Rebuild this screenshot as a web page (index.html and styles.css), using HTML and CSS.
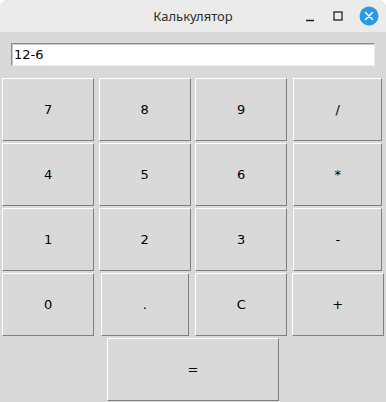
FILE: index.html
```html
<!DOCTYPE html>
<html lang="ru">
<head>
<meta charset="utf-8">
<title>Калькулятор</title>
<link rel="stylesheet" href="styles.css">
</head>
<body>
<div class="window">
  <div class="titlebar">
    <div class="title">Калькулятор</div>
    <div class="controls">
      <svg class="ctl" width="14" height="14" viewBox="0 0 14 14"><line x1="3" y1="11.5" x2="11" y2="11.5" stroke="#222" stroke-width="1.3"/></svg>
      <svg class="ctl" width="14" height="14" viewBox="0 0 14 14"><rect x="3" y="3" width="8" height="8" fill="none" stroke="#222" stroke-width="1.3"/></svg>
      <svg class="ctl close" width="20" height="20" viewBox="0 0 20 20"><circle cx="10" cy="10" r="9.5" fill="#2a9be0"/><path d="M6.5 6.5 L13.5 13.5 M13.5 6.5 L6.5 13.5" stroke="#fff" stroke-width="1.5" stroke-linecap="round"/></svg>
    </div>
  </div>
  <div class="content">
    <div class="entry">12-6</div>
    <div class="keys">
      <div class="btn">7</div>
      <div class="btn">8</div>
      <div class="btn">9</div>
      <div class="btn narrow">/</div>
      <div class="btn">4</div>
      <div class="btn">5</div>
      <div class="btn">6</div>
      <div class="btn narrow">*</div>
      <div class="btn">1</div>
      <div class="btn">2</div>
      <div class="btn">3</div>
      <div class="btn narrow">-</div>
      <div class="btn">0</div>
      <div class="btn dot">.</div>
      <div class="btn">C</div>
      <div class="btn">+</div>
      <div class="btn equals">=</div>
    </div>
  </div>
</div>
</body>
</html>
```

FILE: styles.css
```css
html, body {
  margin: 0;
  padding: 0;
  background: #ffffff;
}
.window {
  width: 386px;
  height: 402px;
  background: #d9d9d9;
  border-radius: 8px 8px 0 0;
  overflow: hidden;
  display: flex;
  flex-direction: column;
}
.titlebar {
  height: 32px;
  background: #ebebeb;
  position: relative;
  display: flex;
  align-items: center;
  justify-content: center;
}
.title {
  font-family: "Noto Sans", sans-serif;
  font-size: 13px;
  color: #2e2e2e;
}
.controls {
  position: absolute;
  right: 7px;
  top: 6px;
  display: flex;
  align-items: center;
  gap: 14px;
}
.ctl {
  display: block;
}
.content {
  display: flex;
  flex-direction: column;
}
.entry {
  margin: 11px 0 0 11px;
  width: 360px;
  height: 21px;
  background: #ffffff;
  border-top: 1px solid #8c8c8c;
  border-left: 1px solid #8c8c8c;
  border-bottom: 1px solid #ececec;
  border-right: 1px solid #ececec;
  box-shadow: inset 1px 1px 0 #c8c8c8;
  font-family: "DejaVu Sans", sans-serif;
  font-size: 13px;
  line-height: 21px;
  padding-left: 2px;
  box-sizing: content-box;
  color: #000;
}
.keys {
  margin-top: 12px;
  display: grid;
  grid-template-columns: repeat(4, 1fr);
  grid-auto-rows: 63px;
  row-gap: 2px;
  justify-items: center;
}
.btn {
  width: 92px;
  height: 63px;
  box-sizing: border-box;
  background: #d9d9d9;
  border-top: 1px solid #ffffff;
  border-left: 1px solid #ffffff;
  border-right: 1px solid #7f7f7f;
  border-bottom: 1px solid #7f7f7f;
  display: flex;
  align-items: center;
  justify-content: center;
  font-family: "DejaVu Sans", sans-serif;
  font-size: 13px;
  color: #000;
}
.btn.narrow {
  width: 89px;
}
.btn.dot {
  width: 88px;
}
.btn.equals {
  grid-column: 2 / 4;
  width: 172px;
}
```
